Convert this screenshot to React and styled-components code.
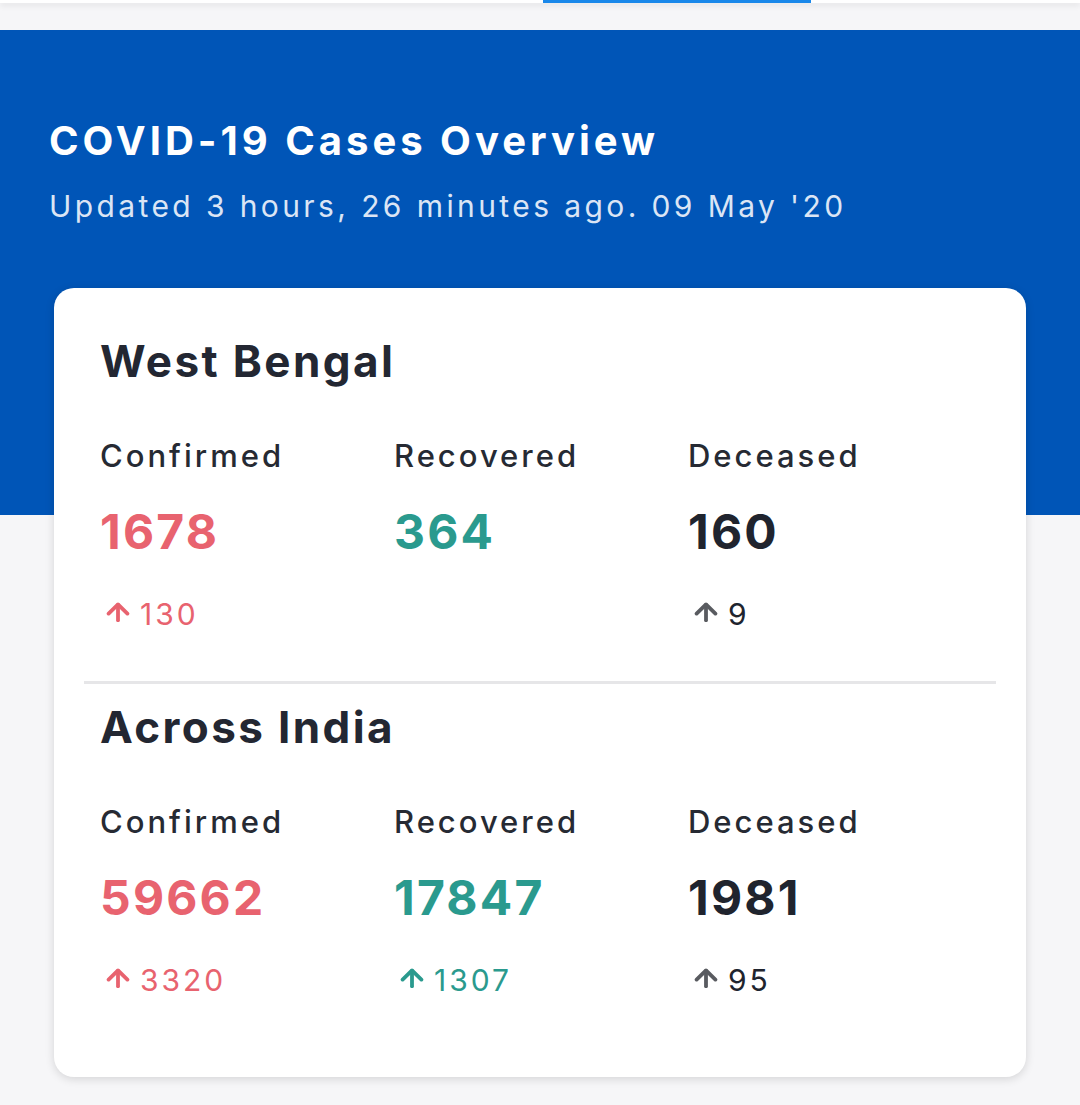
import React from "react";
import styled, { createGlobalStyle } from "styled-components";

const Global = createGlobalStyle`
  html, body { margin: 0; padding: 0; background: #f6f6f8; }
  body { font-family: Inter, "Noto Sans", "Liberation Sans", sans-serif; }
  * { box-sizing: border-box; }
`;

const Page = styled.div`
  width: 1080px;
  min-height: 1105px;
  background: #f6f6f8;
  overflow: hidden;
`;

const TabBar = styled.div`
  height: 3px;
  background: #ffffff;
  display: flex;
  box-shadow: 0 2px 6px rgba(0, 0, 0, 0.12);
  position: relative;
  z-index: 1;
`;

const TabIndicator = styled.div`
  margin-left: 543px;
  width: 268px;
  height: 3px;
  background: #1a88ea;
`;

const Gap = styled.div`
  height: 27px;
`;

const Hero = styled.header`
  background: #0055b7;
  height: 485px;
  padding: 83px 49px 0;
`;

const Title = styled.h1`
  margin: 0;
  color: #ffffff;
  font-size: 40px;
  line-height: 56px;
  font-weight: 700;
  letter-spacing: 4px;
`;

const Subtitle = styled.p`
  margin: 17px 0 0;
  color: #dbe5f5;
  font-size: 30px;
  line-height: 40px;
  font-weight: 400;
  letter-spacing: 3.4px;
`;

const Card = styled.section`
  margin: -227px 54px 0;
  background: #ffffff;
  border-radius: 20px;
  box-shadow: 0 2px 10px rgba(0, 0, 0, 0.14);
  padding: 43px 30px 77px;
`;

const Region = styled.div`
  padding: 0 16px;
`;

const RegionName = styled.h2`
  margin: 0;
  color: #232732;
  font-size: 44px;
  line-height: 60px;
  font-weight: 700;
  letter-spacing: 2.4px;
`;

const Stats = styled.div`
  display: grid;
  grid-template-columns: 294px 294px 294px;
  margin-top: 45px;
`;

const Stat = styled.div`
  display: flex;
  flex-direction: column;
`;

const Label = styled.div`
  color: #262a33;
  font-size: 31px;
  line-height: 40px;
  font-weight: 500;
  letter-spacing: 3px;
`;

const Value = styled.div`
  margin-top: 24px;
  color: ${(p) => p.$color};
  font-size: 48px;
  line-height: 64px;
  font-weight: 700;
  letter-spacing: 2.2px;
`;

const Delta = styled.div`
  margin-top: 30px;
  height: 40px;
  display: flex;
  align-items: center;
  gap: 10px;
  color: ${(p) => p.$color};
  font-size: 30px;
  line-height: 40px;
  font-weight: 400;
  letter-spacing: 3px;
  svg {
    color: ${(p) => p.$arrow || p.$color};
    margin-left: 6px;
    margin-top: -5px;
    flex: none;
  }
`;

const Divider = styled.hr`
  margin: 47px 0 13px;
  border: none;
  height: 3px;
  background: #e6e6e8;
`;

const ArrowUp = () => (
  <svg width="24" height="20" viewBox="0 0 24 20" fill="none" stroke="currentColor" strokeWidth="3.8" strokeLinecap="round" strokeLinejoin="round">
    <path d="M12 18.2V2.8" />
    <path d="M2.6 11.6L12 2.4L21.4 11.6" />
  </svg>
);

const RED = "#e8636f";
const TEAL = "#2a9a8e";
const DARK = "#20242e";

const data = [
  {
    name: "West Bengal",
    stats: [
      { label: "Confirmed", value: "1678", delta: "130", color: RED },
      { label: "Recovered", value: "364", delta: null, color: TEAL },
      { label: "Deceased", value: "160", delta: "9", color: DARK, arrow: "#595b60" },
    ],
  },
  {
    name: "Across India",
    stats: [
      { label: "Confirmed", value: "59662", delta: "3320", color: RED },
      { label: "Recovered", value: "17847", delta: "1307", color: TEAL },
      { label: "Deceased", value: "1981", delta: "95", color: DARK, arrow: "#595b60" },
    ],
  },
];

export default function App() {
  return (
    <Page>
      <Global />
      <TabBar>
        <TabIndicator />
      </TabBar>
      <Gap />
      <Hero>
        <Title>COVID-19 Cases Overview</Title>
        <Subtitle>Updated 3 hours, 26 minutes ago. 09 May '20</Subtitle>
      </Hero>
      <Card>
        {data.map((region, i) => (
          <React.Fragment key={region.name}>
            {i > 0 && <Divider />}
            <Region>
              <RegionName>{region.name}</RegionName>
              <Stats>
                {region.stats.map((s) => (
                  <Stat key={s.label}>
                    <Label>{s.label}</Label>
                    <Value $color={s.color}>{s.value}</Value>
                    <Delta $color={s.color} $arrow={s.arrow}>
                      {s.delta && (
                        <>
                          <ArrowUp />
                          {s.delta}
                        </>
                      )}
                    </Delta>
                  </Stat>
                ))}
              </Stats>
            </Region>
          </React.Fragment>
        ))}
      </Card>
    </Page>
  );
}
